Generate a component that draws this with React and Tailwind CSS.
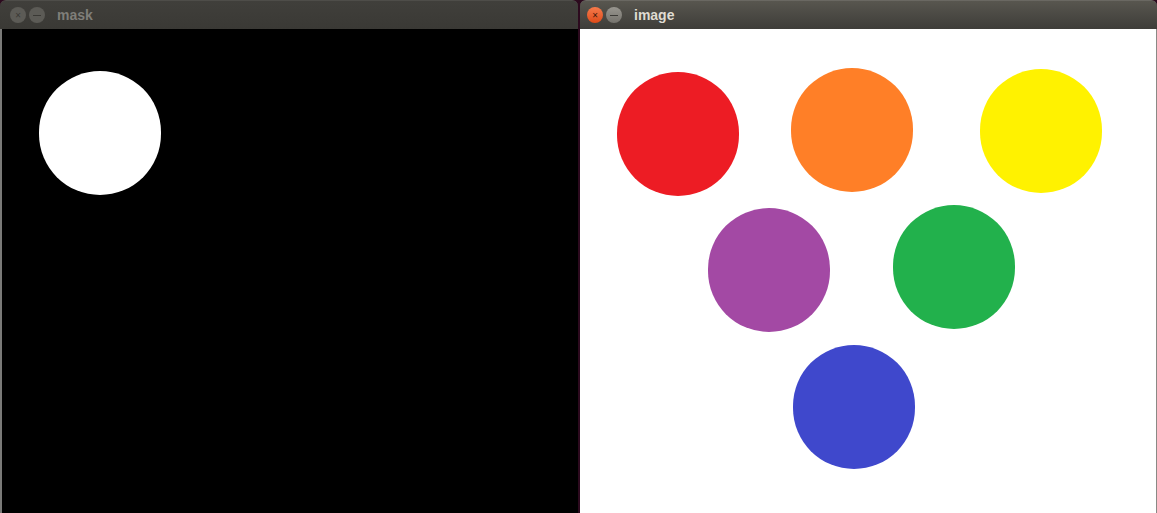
import React from "react";

const dots = [
    { x: 98, y: 72, c: "bg-[#ed1c24]" },
    { x: 272, y: 68, c: "bg-[#ff7f27]" },
    { x: 461, y: 69, c: "bg-[#fff200]" },
    { x: 189, y: 208, c: "bg-[#a349a4]" },
    { x: 374, y: 205, c: "bg-[#22b14c]" },
    { x: 274, y: 345, c: "bg-[#3f48cc]" },
];

function TitleBar({ title, active }) {
    return (
        <div
            className={`h-[29px] shrink-0 flex items-center rounded-t-[6px] border-t ${
                active
                    ? "pl-[7px] bg-gradient-to-b from-[#58564f] to-[#3e3d39] border-[#6a6862]"
                    : "pl-[10px] bg-gradient-to-b from-[#403f3b] to-[#3a3935] border-[#4e4d49]"
            }`}
        >
            <div className="flex items-center gap-[3px]">
                <div
                    className={`w-[16px] h-[16px] shrink-0 rounded-full flex items-center justify-center text-[10px] leading-none ${
                        active
                            ? "bg-gradient-to-b from-[#f57a4a] to-[#df4a16] text-[#3c1a0c]"
                            : "bg-[#5c5b56] text-[#3a3935]"
                    }`}
                >
                    ×
                </div>
                <div
                    className={`w-[16px] h-[16px] shrink-0 rounded-full flex items-center justify-center ${
                        active ? "bg-gradient-to-b from-[#98968f] to-[#75736d]" : "bg-[#5c5b56]"
                    }`}
                >
                    <div className={`w-[8px] h-[1px] ${active ? "bg-[#3c3b37]" : "bg-[#3a3935]"}`} />
                </div>
            </div>
            <span
                className={`ml-[12px] font-bold text-[14px] ${active ? "text-[#dfdbd2]" : "text-[#7f7e79]"}`}
                style={{ fontFamily: '"Liberation Sans", Arial, sans-serif' }}
            >
                {title}
            </span>
        </div>
    );
}

export default function App() {
    return (
        <div className="w-[1157px] h-[513px] overflow-hidden flex bg-[#2c0a1e]">
            {/* MASK WINDOW */}
            <div className="w-[578px] shrink-0 flex flex-col">
                <TitleBar title="mask" />
                <div className="flex-1 border-l-2 border-[#7a7a78] bg-black relative">
                    <div className="absolute left-[37px] top-[42px] w-[122px] h-[124px] rounded-full bg-white" />
                </div>
            </div>

            <div className="w-[2px] shrink-0" />

            {/* IMAGE WINDOW */}
            <div className="flex-1 flex flex-col">
                <TitleBar title="image" active />
                <div className="flex-1 bg-white border-r border-[#8a8985] relative">
                    {dots.map((d, i) => (
                        <div
                            key={i}
                            className={`absolute w-[122px] h-[124px] rounded-full ${d.c}`}
                            style={{ left: d.x - 61, top: d.y - 29 }}
                        />
                    ))}
                </div>
            </div>
        </div>
    );
}
